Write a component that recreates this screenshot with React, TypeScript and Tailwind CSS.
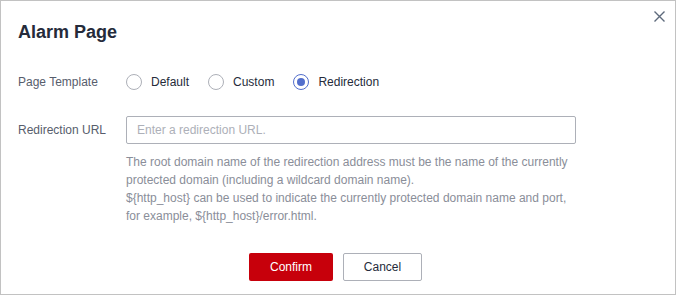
import React from "react";

function Radio({ label, checked }: { label: string; checked?: boolean }) {
  return (
    <label className="flex items-center">
      <span
        className={
          "flex h-4 w-4 items-center justify-center rounded-full border bg-white " +
          (checked ? "border-[#526ecc]" : "border-[#adb0b8]")
        }
      >
        {checked && <span className="h-2 w-2 rounded-full bg-[#526ecc]" />}
      </span>
      <span className="ml-[9px] text-[12px] text-[#252b3a]">{label}</span>
    </label>
  );
}

export default function App() {
  return (
    <div
      className="relative h-[295px] w-[676px] border border-[#c2c2c2] bg-white"
      style={{ fontFamily: '"Liberation Sans", Arial, sans-serif' }}
    >
      <button className="absolute right-[10px] top-[10px] text-[#5e6a7c]">
        <svg width="11" height="11" viewBox="0 0 11 11">
          <path d="M0.5 0.5L10.5 10.5M10.5 0.5L0.5 10.5" stroke="currentColor" strokeWidth="1.4" />
        </svg>
      </button>
      <div className="pl-[17px] pt-[19px]">
        <h1 className="text-[18px] font-bold leading-[24px] text-[#252b3a]">Alarm Page</h1>
        <div className="mt-[30px] flex h-4 items-center">
          <div className="w-[108px] text-[12px] text-[#575d6c]">Page Template</div>
          <div className="flex items-center gap-[19px]">
            <Radio label="Default" />
            <Radio label="Custom" />
            <Radio label="Redirection" checked />
          </div>
        </div>
        <div className="mt-[26px] flex">
          <div className="w-[108px] pt-[7px] text-[12px] leading-[14px] text-[#575d6c]">Redirection URL</div>
          <div className="w-[450px]">
            <div className="flex h-[28px] items-center rounded-[2px] border border-[#adb0b8] px-[10px] text-[12px] text-[#adb0b8]">
              Enter a redirection URL.
            </div>
            <div className="mt-[9px] text-[12px] leading-[18px] text-[#8a8e99]">
              <div>The root domain name of the redirection address must be the name of the currently</div>
              <div>protected domain (including a wildcard domain name).</div>
              <div>{"${http_host} can be used to indicate the currently protected domain name and port,"}</div>
              <div>{"for example, ${http_host}/error.html."}</div>
            </div>
          </div>
        </div>
        <div className="mt-[28px] flex justify-center gap-[10px] pr-[22px]">
          <button className="h-[28px] w-[84px] rounded-[2px] bg-[#c7000b] text-[12px] text-white">Confirm</button>
          <button className="h-[28px] w-[79px] rounded-[2px] border border-[#adb0b8] bg-white text-[12px] text-[#252b3a]">
            Cancel
          </button>
        </div>
      </div>
    </div>
  );
}
